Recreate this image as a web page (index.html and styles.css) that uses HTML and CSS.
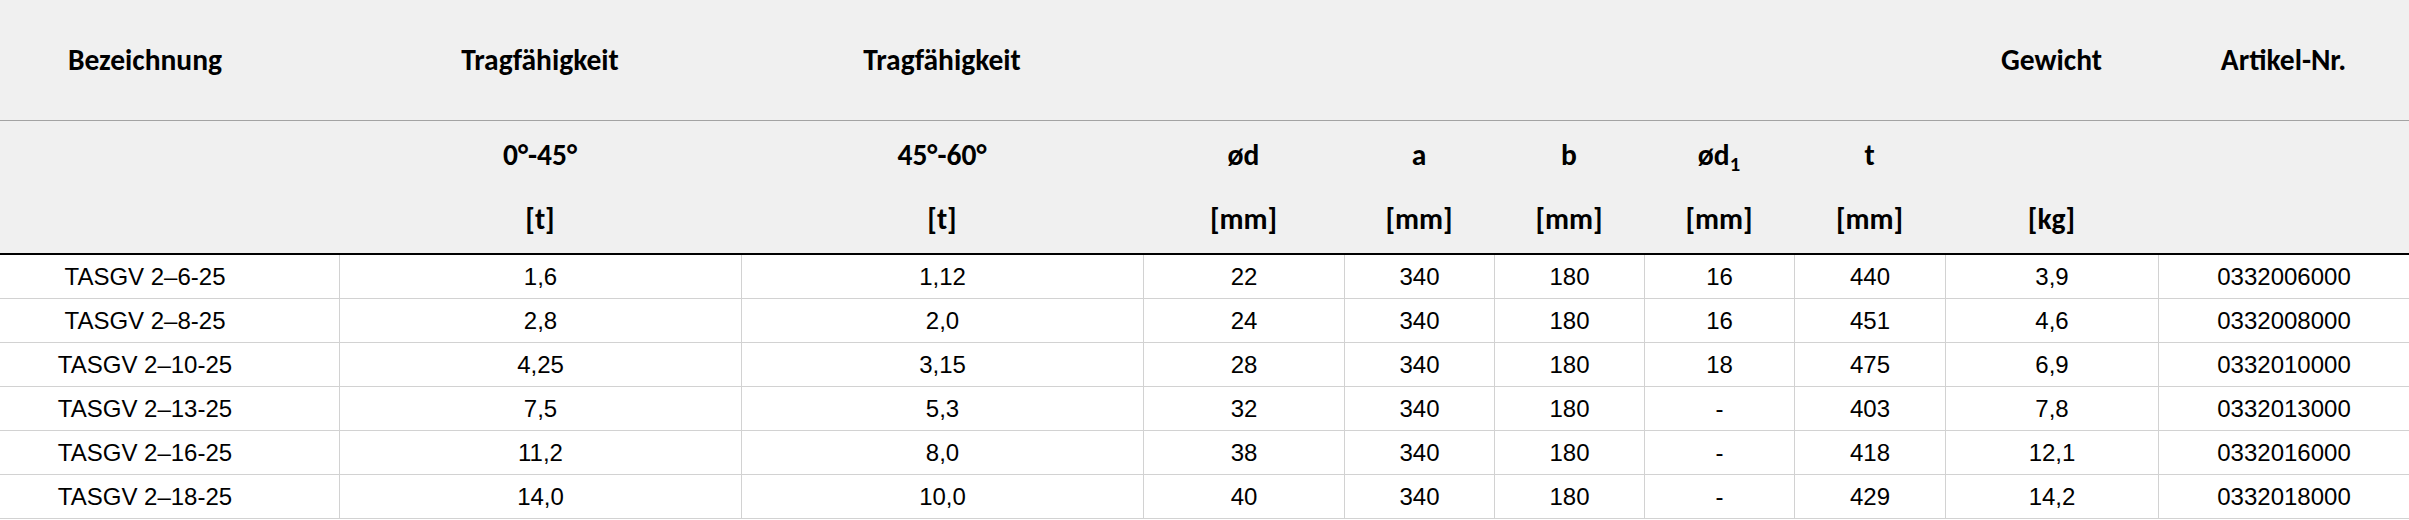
FILE: index.html
```html
<!DOCTYPE html>
<html lang="de">
<head>
<meta charset="utf-8">
<title>TASGV 2</title>
<link rel="stylesheet" href="styles.css">
</head>
<body>
<table class="spec">
  <colgroup>
    <col class="c-name">
    <col class="c-wide">
    <col class="c-wide">
    <col class="c-d">
    <col class="c-std">
    <col class="c-std">
    <col class="c-std">
    <col class="c-t">
    <col class="c-kg">
    <col class="c-art">
  </colgroup>
  <thead>
    <tr class="h1">
      <th class="first">Bezeichnung</th>
      <th>Tragfähigkeit</th>
      <th>Tragfähigkeit</th>
      <th></th><th></th><th></th><th></th><th></th>
      <th>Gewicht</th>
      <th>Artikel-Nr.</th>
    </tr>
    <tr class="h2">
      <th class="first"></th>
      <th>0°-45°</th>
      <th>45°-60°</th>
      <th>ød</th>
      <th>a</th>
      <th>b</th>
      <th>ød<sub>1</sub></th>
      <th>t</th>
      <th></th>
      <th></th>
    </tr>
    <tr class="h3">
      <th class="first"></th>
      <th>[t]</th>
      <th>[t]</th>
      <th>[mm]</th>
      <th>[mm]</th>
      <th>[mm]</th>
      <th>[mm]</th>
      <th>[mm]</th>
      <th>[kg]</th>
      <th></th>
    </tr>
  </thead>
  <tbody>
    <tr><td class="first">TASGV 2–6-25</td><td>1,6</td><td>1,12</td><td>22</td><td>340</td><td>180</td><td>16</td><td>440</td><td>3,9</td><td>0332006000</td></tr>
    <tr><td class="first">TASGV 2–8-25</td><td>2,8</td><td>2,0</td><td>24</td><td>340</td><td>180</td><td>16</td><td>451</td><td>4,6</td><td>0332008000</td></tr>
    <tr><td class="first">TASGV 2–10-25</td><td>4,25</td><td>3,15</td><td>28</td><td>340</td><td>180</td><td>18</td><td>475</td><td>6,9</td><td>0332010000</td></tr>
    <tr><td class="first">TASGV 2–13-25</td><td>7,5</td><td>5,3</td><td>32</td><td>340</td><td>180</td><td>-</td><td>403</td><td>7,8</td><td>0332013000</td></tr>
    <tr><td class="first">TASGV 2–16-25</td><td>11,2</td><td>8,0</td><td>38</td><td>340</td><td>180</td><td>-</td><td>418</td><td>12,1</td><td>0332016000</td></tr>
    <tr><td class="first">TASGV 2–18-25</td><td>14,0</td><td>10,0</td><td>40</td><td>340</td><td>180</td><td>-</td><td>429</td><td>14,2</td><td>0332018000</td></tr>
  </tbody>
</table>
</body>
</html>
```

FILE: styles.css
```css
html, body {
  margin: 0;
  padding: 0;
  background: #ffffff;
}

.spec {
  width: 2409px;
  table-layout: fixed;
  border-collapse: separate;
  border-spacing: 0;
  color: #000;
}

.c-name { width: 339px; }
.c-wide { width: 402px; }
.c-d { width: 201px; }
.c-std { width: 150px; }
.c-t { width: 151px; }
.c-kg { width: 213px; }
.c-art { width: 251px; }

.spec th,
.spec td {
  box-sizing: border-box;
  padding: 0;
  text-align: center;
  vertical-align: middle;
  white-space: nowrap;
}

.spec th {
  background: #f0f0f0;
  font-family: Carlito, "Open Sans", "Noto Sans", sans-serif;
  font-weight: 700;
  font-size: 29.5px;
}

.spec th.first,
.spec td.first {
  padding-right: 49px;
}

.h1 th {
  height: 121px;
  border-bottom: 1px solid #a3a3a3;
}

.h2 th {
  height: 66px;
  padding-top: 2px;
}

.h3 th {
  height: 68px;
  border-bottom: 2px solid #000;
  padding-bottom: 2px;
}

.spec sub {
  font-size: 0.7em;
  line-height: 0;
  vertical-align: -0.3em;
}

.spec td {
  height: 44px;
  font-family: "Liberation Sans", Arial, sans-serif;
  font-size: 24px;
  border-bottom: 1px solid #d2d2d2;
  border-left: 1px solid #d2d2d2;
}

.spec td.first {
  border-left: none;
}
```
